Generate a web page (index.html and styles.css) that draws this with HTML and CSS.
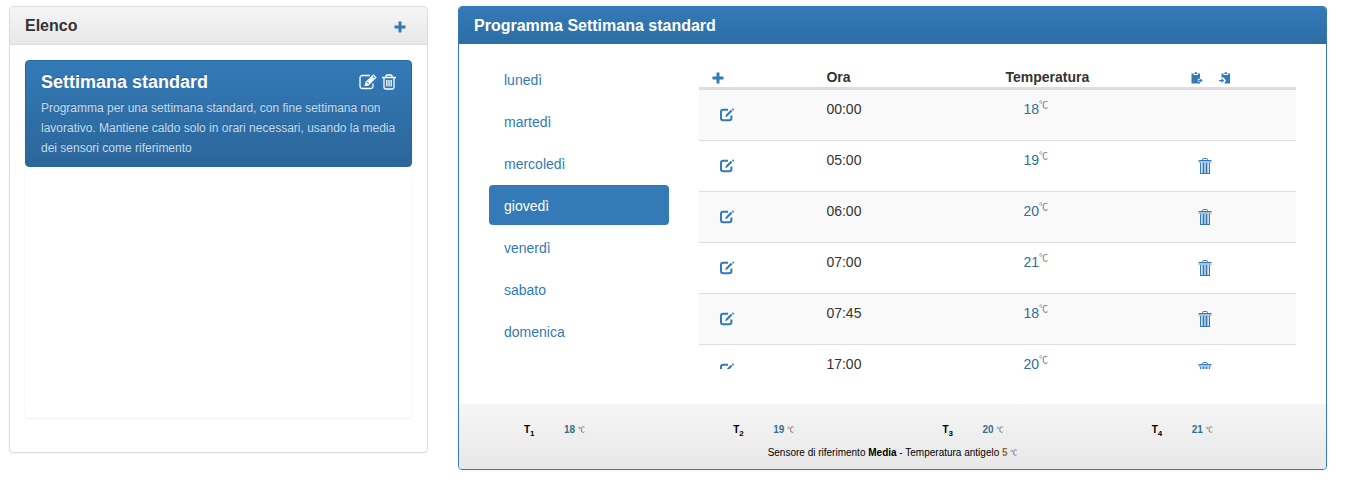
FILE: index.html
```html
<!DOCTYPE html>
<html lang="it">
<head>
<meta charset="utf-8">
<meta name="viewport" content="width=device-width, initial-scale=1">
<title>Programma Settimana standard</title>
<link rel="stylesheet" href="styles.css">
</head>
<body>
<svg class="sprite" aria-hidden="true">
  <symbol id="plus" viewBox="0 0 12 12"><path fill="currentColor" d="M4.500 0.500h3v4h4v3h-4v4h-3v-4h-4v-3h4z"/></symbol>
  <symbol id="edit" viewBox="0 0 16 14">
    <path fill="none" stroke="currentColor" stroke-width="2" d="M9 1.800H4.200Q2 1.800 2 4v6Q2 12.200 4.200 12.200h6Q12.400 12.200 12.400 10V7.500"/>
    <path fill="currentColor" d="M6.200 9.300l.7-2.500 5-5 1.500 1.500-5 5zM12.800 1.200l1-1 1.500 1.500-1 1z"/>
  </symbol>
  <symbol id="compose" viewBox="0 0 18 16">
    <path fill="none" stroke="currentColor" stroke-width="1.300" d="M11 1.500H3.500Q1 1.500 1 4v8q0 2.500 2.500 2.500h8q2.500 0 2.500-2.500V9.500"/>
    <path fill="none" stroke="currentColor" stroke-width="1.200" d="M6.300 11.400l.7-3 7.300-7.300 2.500 2.500-7.400 7.300zM12.500 2.800l2.500 2.500M7 8.400l2.400 2.500"/>
    <path fill="currentColor" d="M6.500 11.200l.6-2.500 2 2zM8.500 7.800l5-5 1.600 1.600-5 5z"/>
  </symbol>
  <symbol id="trash-o" viewBox="0 0 14 16">
    <path fill="none" stroke="currentColor" stroke-width="1.300" d="M0 3.500h14M4 3.500V2q0-1 1-1h4q1 0 1 1v1.500M2 3.500V13q0 2 1.500 2h7q1.500 0 1.500-2V3.500M4.800 6v6.500M7 6v6.500M9.200 6v6.500"/>
  </symbol>
  <symbol id="trash" viewBox="0 0 14 16">
    <path fill="none" stroke="currentColor" d="M4.500 2.500v-1q0-1 1-1h3q1 0 1 1v1M.500 2.500h13M2 15.500h10M2.500 5v10M11.500 5v10M5.500 5v10M8.500 5v10"/>
    <path fill="currentColor" opacity=".45" d="M.500 3h13v2H.500zM3.500 5h1.500v10H3.500zM6 5h2v10H6zM9 5h1.500v10H9z"/>
  </symbol>
  <symbol id="copy" viewBox="0 0 12 12">
    <path fill="currentColor" d="M.500 1.500h2V3h4.500V1.500h2v5.300H6.800v3h2.300v1.700H.500zM3.300 2V1l.7-.2.3-.8h1l.3.8.7.2v1z"/>
    <path fill="currentColor" d="M7.300 7.800h2V6.500l2.500 2-2.500 2V9.200h-2z"/>
  </symbol>
  <symbol id="paste" viewBox="0 0 12 12">
    <path fill="currentColor" d="M2.500 1.500h2V3H9V1.500h2v10H5.300l1.700-3-2.400-3H2.500zM5.300 2V1l.7-.2.3-.8h1l.3.8.7.2v1z"/>
    <path fill="currentColor" d="M0 7.900h2.500V6.300L5.300 8.600l-2.800 2.300V9.300H0z"/>
  </symbol>
</svg>
<main class="layout">
  <section class="panel panel-default">
    <header class="panel-heading">
      <h1 class="panel-title">Elenco</h1>
      <button class="icon-button add-program" type="button" aria-label="Aggiungi programma"><svg class="icon icon-small"><use href="#plus"/></svg></button>
    </header>
    <div class="panel-body">
      <div class="program-list">
        <article class="program active">
          <div class="program-head">
            <h2 class="program-title">Settimana standard</h2>
            <div class="program-tools">
              <button class="icon-button" type="button" aria-label="Modifica programma"><svg class="icon icon-compose"><use href="#compose"/></svg></button>
              <button class="icon-button" type="button" aria-label="Elimina programma"><svg class="icon icon-trash"><use href="#trash-o"/></svg></button>
            </div>
          </div>
          <p class="program-text">Programma per una settimana standard, con fine settimana non lavorativo. Mantiene caldo solo in orari necessari, usando la media dei sensori come riferimento</p>
        </article>
      </div>
    </div>
  </section>

  <section class="panel panel-primary">
    <header class="panel-heading">
      <h1 class="panel-title">Programma <strong>Settimana standard</strong></h1>
    </header>
    <div class="panel-body schedule">
      <nav class="days">
        <a class="day" href="#">lunedì</a>
        <a class="day" href="#">martedì</a>
        <a class="day" href="#">mercoledì</a>
        <a class="day active" href="#" aria-current="true">giovedì</a>
        <a class="day" href="#">venerdì</a>
        <a class="day" href="#">sabato</a>
        <a class="day" href="#">domenica</a>
      </nav>
      <div class="table-scroll">
        <table class="hours">
          <thead>
            <tr>
              <th class="col-edit"><button class="icon-button" type="button" aria-label="Aggiungi orario"><svg class="icon icon-small"><use href="#plus"/></svg></button></th>
              <th class="col-hour">Ora</th>
              <th class="col-temp">Temperatura</th>
              <th class="col-tools"><div class="clip-tools">
                <button class="icon-button" type="button" aria-label="Copia giorno"><svg class="icon icon-small"><use href="#copy"/></svg></button>
                <button class="icon-button" type="button" aria-label="Incolla giorno"><svg class="icon icon-small"><use href="#paste"/></svg></button>
              </div></th>
            </tr>
          </thead>
          <tbody>
            <tr><td><button class="row-button" type="button" aria-label="Modifica 00:00"><svg class="icon icon-edit"><use href="#edit"/></svg></button></td><td>00:00</td><td class="temp">18<sup class="unit">℃</sup></td><td></td></tr>
            <tr><td><button class="row-button" type="button" aria-label="Modifica 05:00"><svg class="icon icon-edit"><use href="#edit"/></svg></button></td><td>05:00</td><td class="temp">19<sup class="unit">℃</sup></td><td><button class="row-button" type="button" aria-label="Elimina 05:00"><svg class="icon icon-trash"><use href="#trash"/></svg></button></td></tr>
            <tr><td><button class="row-button" type="button" aria-label="Modifica 06:00"><svg class="icon icon-edit"><use href="#edit"/></svg></button></td><td>06:00</td><td class="temp">20<sup class="unit">℃</sup></td><td><button class="row-button" type="button" aria-label="Elimina 06:00"><svg class="icon icon-trash"><use href="#trash"/></svg></button></td></tr>
            <tr><td><button class="row-button" type="button" aria-label="Modifica 07:00"><svg class="icon icon-edit"><use href="#edit"/></svg></button></td><td>07:00</td><td class="temp">21<sup class="unit">℃</sup></td><td><button class="row-button" type="button" aria-label="Elimina 07:00"><svg class="icon icon-trash"><use href="#trash"/></svg></button></td></tr>
            <tr><td><button class="row-button" type="button" aria-label="Modifica 07:45"><svg class="icon icon-edit"><use href="#edit"/></svg></button></td><td>07:45</td><td class="temp">18<sup class="unit">℃</sup></td><td><button class="row-button" type="button" aria-label="Elimina 07:45"><svg class="icon icon-trash"><use href="#trash"/></svg></button></td></tr>
            <tr><td><button class="row-button" type="button" aria-label="Modifica 17:00"><svg class="icon icon-edit"><use href="#edit"/></svg></button></td><td>17:00</td><td class="temp">20<sup class="unit">℃</sup></td><td><button class="row-button" type="button" aria-label="Elimina 17:00"><svg class="icon icon-trash"><use href="#trash"/></svg></button></td></tr>
          </tbody>
        </table>
      </div>
    </div>
    <footer class="panel-footer">
      <dl class="levels">
        <div class="level"><dt>T<sub>1</sub></dt><dd><b>18</b> <span class="unit">℃</span></dd></div>
        <div class="level"><dt>T<sub>2</sub></dt><dd><b>19</b> <span class="unit">℃</span></dd></div>
        <div class="level"><dt>T<sub>3</sub></dt><dd><b>20</b> <span class="unit">℃</span></dd></div>
        <div class="level"><dt>T<sub>4</sub></dt><dd><b>21</b> <span class="unit">℃</span></dd></div>
      </dl>
      <p class="sensor">Sensore di riferimento <strong>Media</strong> - Temperatura antigelo <b class="frost">5</b> <span class="unit">℃</span></p>
    </footer>
  </section>
</main>
</body>
</html>
```
FILE: styles.css
```css
* { box-sizing: border-box; }

body {
  margin: 0;
  background: #fff;
  color: #333;
  font: 14px/20px "Liberation Sans", Arial, sans-serif;
}

.sprite { position: absolute; width: 0; height: 0; }

.layout {
  display: grid;
  grid-template-columns: minmax(0, 419fr) minmax(0, 869fr);
  gap: 30px;
  align-items: start;
  padding: 6px 20px 20px 9px;
}

.icon { display: block; width: 16px; height: 16px; }
.icon-small { width: 12px; height: 12px; }
.icon-compose { width: 18px; height: 16px; }
.icon-trash { width: 14px; height: 16px; }

.icon-button,
.row-button {
  display: block;
  border: 0;
  padding: 0;
  background: none;
  color: #337ab7;
  cursor: pointer;
}

.panel {
  border: 1px solid #ddd;
  border-radius: 4px;
  background: #fff;
  box-shadow: 0 1px 2px rgba(0, 0, 0, .05);
  overflow: hidden;
}

.panel-heading {
  display: flex;
  align-items: center;
  justify-content: space-between;
  padding: 9px 15px;
  border-bottom: 1px solid #ddd;
  background: linear-gradient(#f5f5f5, #e8e8e8);
}

.panel-title { margin: 0; font-size: 16px; line-height: 19px; font-weight: bold; }
.add-program { padding: 3px 6px 0; }
.panel-body { padding: 15px; }

.panel-primary { border-color: #337ab7; }
.panel-primary .panel-heading {
  border-bottom: 0;
  background: linear-gradient(#337ab7, #2e6da4);
  color: #fff;
}

.program-list {
  min-height: 358px;
  margin-bottom: 19px;
  border-radius: 4px;
  box-shadow: 0 1px 2px rgba(0, 0, 0, .075);
}

.program {
  padding: 10px 15px 8px;
  border: 1px solid #2b669a;
  border-radius: 4px;
  background: linear-gradient(#337ab7, #2b669a);
  color: #fff;
  text-shadow: 0 -1px 0 #286090;
}
.program-head { display: flex; justify-content: space-between; align-items: center; }
.program-title { margin: 0; font-size: 18px; line-height: 22px; font-weight: bold; }
.program-tools { display: flex; gap: 5px; }
.program-tools .icon-button { color: #fff; }
.program-text { margin: 5px 0 0; color: #c7ddef; font-size: 12px; }

.schedule {
  display: grid;
  grid-template-columns: 180px minmax(0, 1fr);
  gap: 30px;
  align-items: start;
  padding: 15px 30px 35px;
}

.days { display: grid; gap: 2px; }
.day { padding: 11px 15px 9px; border-radius: 4px; color: #337ab7; text-decoration: none; }
.day.active { background: #337ab7; color: #fff; }

.table-scroll { margin-top: 8px; max-height: 302px; overflow: auto; scrollbar-width: none; }

.hours { width: 100%; table-layout: fixed; border-collapse: separate; border-spacing: 0; }
.hours th { padding: 0 8px; border-bottom: 3px solid #ddd; text-align: left; }
.hours th .icon-button { padding-top: 2px; }
.hours .col-edit { width: 20%; padding-left: 13px; }
.hours .col-hour,
.hours .col-temp { width: 30%; }
.hours .col-tools { width: 20%; }
.hours td { padding: 9px 8px 7px; border-bottom: 1px solid #ddd; vertical-align: top; }
.hours tbody tr:nth-child(odd) { background: #f9f9f9; }
.hours .temp { padding-left: 26px; color: #31708f; }
.clip-tools { display: flex; gap: 16px; padding-left: 6px; }

.row-button { padding: 8px 12px 10px; }
.hours td:last-child { padding-left: 9px; }

.unit { color: #777; font-family: "Noto Sans CJK SC", sans-serif; line-height: 1; }
.hours .unit { font-size: 9px; line-height: 0; }

.panel-footer {
  padding: 16px 15px 6px;
  background: linear-gradient(#f5f5f5, #e8e8e8);
  color: #000;
  font-size: 10px;
}
.panel-footer .unit { color: #555; font-size: 7px; vertical-align: 1px; }
.levels { display: grid; grid-template-columns: repeat(4, 1fr); margin: 0 0 3px; }
.level { display: flex; padding-left: 50px; }
.level dt { width: 40px; font-weight: bold; }
.level sub { font-size: 8px; line-height: 0; }
.level dd { margin: 0; }
.level b { color: #31708f; }
.sensor { margin: 0; text-align: center; }
.frost { color: #8a6d3b; }
```
